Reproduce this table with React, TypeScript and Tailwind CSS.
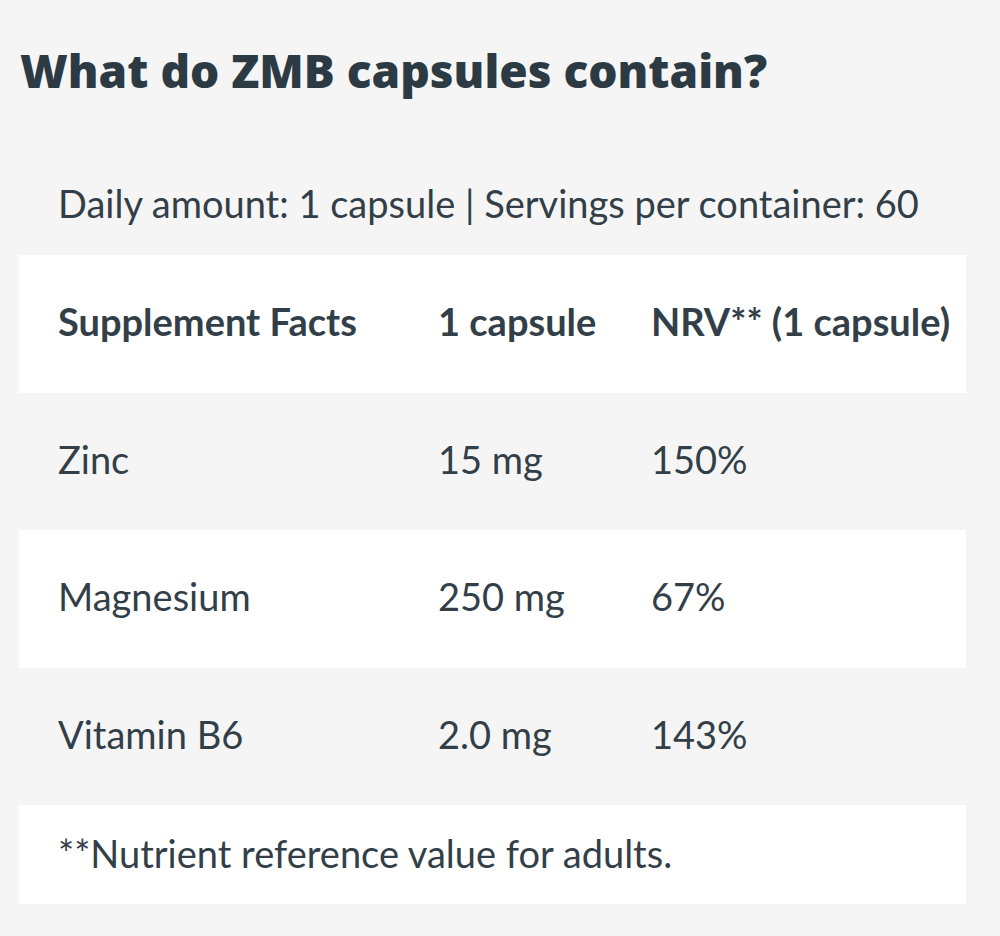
const rows = [
  { name: 'Zinc', amount: '15 mg', nrv: '150%' },
  { name: 'Magnesium', amount: '250 mg', nrv: '67%' },
  { name: 'Vitamin B6', amount: '2.0 mg', nrv: '143%' },
];

export default function App() {
  return (
    <div className="min-h-[936px] bg-[#f5f5f5] text-[#333f48] pl-[19px] pr-[34px] pt-[40px]" style={{ fontFamily: 'Lato, "Open Sans", sans-serif' }}>
      <h1 className="text-[46px] leading-[60px] font-extrabold text-[#2c3a44] pl-[1px]" style={{ fontFamily: '"Open Sans", sans-serif' }}>
        What do ZMB capsules contain?
      </h1>

      <p className="mt-[77px] pl-[39px] text-[38px] leading-[52px]">
        Daily amount: 1 capsule | Servings per container: 60
      </p>

      <table className="mt-[26px] w-full border-collapse text-[38px] leading-[52px]">
        <thead>
          <tr className="bg-white h-[138px]">
            <th className="text-left font-bold pl-[39px] pb-[6px] w-[380px]">Supplement Facts</th>
            <th className="text-left font-bold pl-[39px] pb-[6px] w-[213px]">1 capsule</th>
            <th className="text-left font-bold pl-[39px] pb-[6px]">NRV** (1 capsule)</th>
          </tr>
        </thead>
        <tbody>
          {rows.map((r, i) => (
            <tr key={r.name} className={i % 2 === 1 ? 'bg-white h-[138px]' : 'bg-[#f5f5f5] h-[137px]'}>
              <td className="pl-[39px] pb-[6px]">{r.name}</td>
              <td className="pl-[39px] pb-[6px]">{r.amount}</td>
              <td className="pl-[39px] pb-[6px]">{r.nrv}</td>
            </tr>
          ))}
          <tr className="bg-white h-[99px]">
            <td colSpan={3} className="pl-[39px] pb-[4px]">**Nutrient reference value for adults.</td>
          </tr>
        </tbody>
      </table>
    </div>
  );
}
